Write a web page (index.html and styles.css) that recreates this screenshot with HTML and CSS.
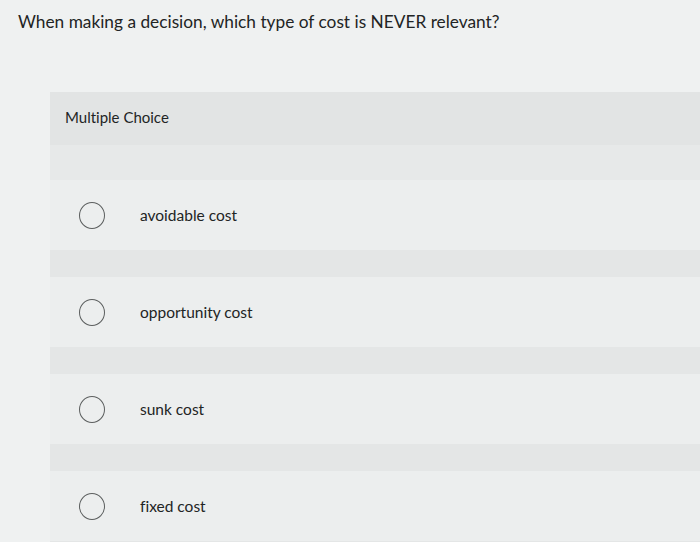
FILE: index.html
```html
<!DOCTYPE html>
<html>
<head>
<meta charset="utf-8">
<link rel="stylesheet" href="styles.css">
</head>
<body>
<div class="question">When making a decision, which type of cost is NEVER relevant?</div>
<div class="panel">
  <div class="panel-head">Multiple Choice</div>
  <div class="spacer"></div>
  <div class="options">
    <div class="option"><span class="radio"></span><span class="label">avoidable cost</span></div>
    <div class="option"><span class="radio"></span><span class="label">opportunity cost</span></div>
    <div class="option"><span class="radio"></span><span class="label">sunk cost</span></div>
    <div class="option"><span class="radio"></span><span class="label">fixed cost</span></div>
  </div>
</div>
</body>
</html>
```
FILE: styles.css
```css
html, body {
  margin: 0;
  padding: 0;
}
body {
  width: 700px;
  height: 542px;
  overflow: hidden;
  background: #eff1f1;
  font-family: "Lato", "Open Sans", sans-serif;
  font-variant-ligatures: none;
  color: #222424;
}
.question {
  font-size: 17.3px;
  line-height: 20px;
  padding: 12px 0 0 18px;
  height: 92px;
  box-sizing: border-box;
}
.panel {
  margin-left: 50px;
  background: #e4e6e6;
  height: 450px;
}
.panel-head {
  height: 53px;
  box-sizing: border-box;
  padding: 16px 0 0 15px;
  font-size: 15px;
  line-height: 18px;
  background: #e2e4e4;
}
.spacer {
  height: 35px;
  background: #e7e9e9;
}
.options {
  display: flex;
  flex-direction: column;
  gap: 27px;
}
.option {
  height: 70px;
  background: #eceeee;
  display: flex;
  align-items: center;
  padding-left: 29px;
}
.radio {
  width: 24px;
  height: 25px;
  border: 1.6px solid #5c5f5f;
  border-radius: 50%;
  flex: none;
}
.label {
  margin-left: 35px;
  font-size: 15.5px;
}
```
